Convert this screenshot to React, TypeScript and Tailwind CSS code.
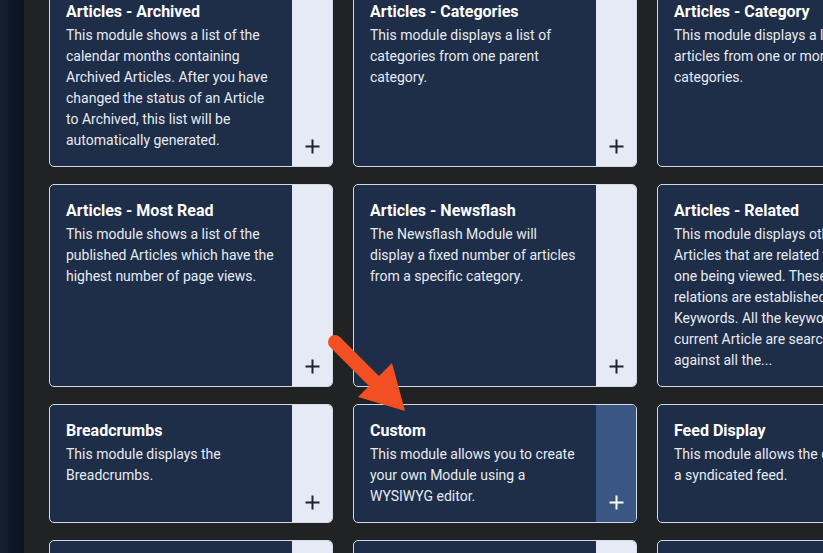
import React from 'react';

type Module = { title: string; desc: string; active?: boolean };

const modules: Module[] = [
  {
    title: 'Articles - Archived',
    desc: 'This module shows a list of the calendar months containing Archived Articles. After you have changed the status of an Article to Archived, this list will be automatically generated.',
  },
  { title: 'Articles - Categories', desc: 'This module displays a list of categories from one parent category.' },
  { title: 'Articles - Category', desc: 'This module displays a list of articles from one or more categories.' },
  {
    title: 'Articles - Most Read',
    desc: 'This module shows a list of the published Articles which have the highest number of page views.',
  },
  { title: 'Articles - Newsflash', desc: 'The Newsflash Module will display a fixed number of articles from a specific category.' },
  {
    title: 'Articles - Related',
    desc: 'This module displays other Articles that are related to the one being viewed. These relations are established by the Keywords. All the keywords of the current Article are searched against all the...',
  },
  { title: 'Breadcrumbs', desc: 'This module displays the Breadcrumbs.' },
  { title: 'Custom', desc: 'This module allows you to create your own Module using a WYSIWYG editor.', active: true },
  { title: 'Feed Display', desc: 'This module allows the display of a syndicated feed.' },
  { title: 'Footer', desc: 'This module shows the Joomla! copyright information.' },
  { title: 'Language Switcher', desc: 'This module displays a list of available Content Languages.' },
  { title: 'Latest Users', desc: 'This module displays the latest registered users.' },
];

const PlusIcon = ({ light }: { light?: boolean }) => (
  <svg width="15" height="15" viewBox="0 0 15 15" className={light ? 'text-white' : 'text-[#1c2230]'}>
    <path d="M7.5 0.5v14M0.5 7.5h14" stroke="currentColor" strokeWidth="2" fill="none" />
  </svg>
);

const ModuleCard = ({ m }: { m: Module }) => (
  <div className="flex rounded-[5px] border border-[#d3dae5] bg-[#1e2d48] overflow-hidden">
    <div className="flex-1 min-w-0 pl-[16px] pr-[16px] pt-[14px] pb-[15px]">
      <div className="text-[16px] leading-[24px] font-bold text-white">{m.title}</div>
      <div className="text-[14px] leading-[21px] text-[#e6ebf3] mt-[1px]">{m.desc}</div>
    </div>
    <div
      className={`w-[40px] shrink-0 flex items-end justify-center pb-[12px] ${
        m.active ? 'bg-[#3a5682]' : 'bg-[#e5eaf4]'
      }`}
    >
      <PlusIcon light={m.active} />
    </div>
  </div>
);

export default function App() {
  return (
    <div
      className="relative w-screen h-screen overflow-hidden bg-[#212224] flex"
      style={{ fontFamily: 'Roboto, "Liberation Sans", sans-serif' }}
    >
      <div className="w-[24px] shrink-0 bg-gradient-to-r from-[#172231] via-[#0e1724] to-[#0c1420]" />
      <div className="flex-1 pl-[25px] mt-[-15px]">
        <div className="grid grid-cols-[284px_284px_284px] gap-x-[20px] gap-y-[17px]">
          {modules.map((m) => (
            <ModuleCard key={m.title} m={m} />
          ))}
        </div>
      </div>
      <svg className="absolute left-[325px] top-[330px] w-[90px] h-[90px]" viewBox="0 0 90 90">
        <path d="M10 12L53 55" stroke="#f24f22" strokeWidth="14" strokeLinecap="round" />
        <polygon points="33,67 67,33 80,81" fill="#f24f22" />
      </svg>
    </div>
  );
}
